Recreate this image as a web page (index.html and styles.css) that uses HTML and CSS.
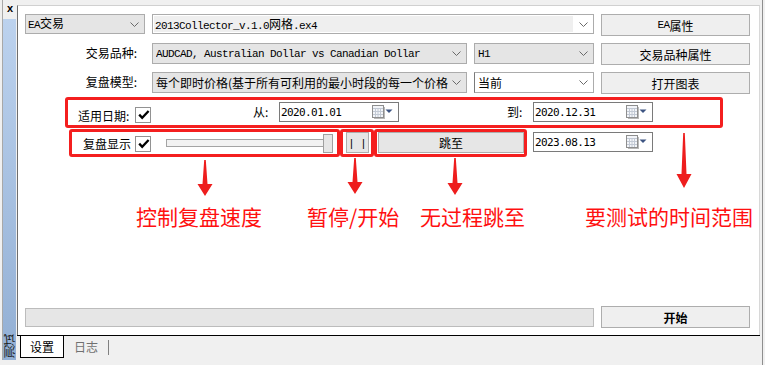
FILE: index.html
```html
<!DOCTYPE html>
<html lang="zh-CN">
<head>
    <meta charset="UTF-8">
    <title>测试</title>
    <link rel="stylesheet" href="styles.css">
</head>
<body>

<div class="side">
    <div class="close">x</div>
    <div class="side-bar"><span class="side-title">测试</span></div>
</div>

<div class="main">
    <div class="panel">
        <div class="row">
            <div class="combo combo-ea">
                <span class="val"><span class="mono">EA</span>交易</span>
                <svg class="chev" width="9" height="5" viewBox="0 0 9 5"><path d="M0.5 0.5 4.5 4.5 8.5 0.5" fill="none" stroke="#6a6a6a"/></svg>
            </div>
            <div class="combo combo-file">
                <span class="edit"><span class="mono">2013Collector_v.1.0</span>网格<span class="mono">.ex4</span></span>
                <svg class="chev" width="9" height="5" viewBox="0 0 9 5"><path d="M0.5 0.5 4.5 4.5 8.5 0.5" fill="none" stroke="#6a6a6a"/></svg>
            </div>
            <button class="btn"><span class="mono">EA</span>属性</button>
        </div>

        <div class="row">
            <div class="label">交易品种:</div>
            <div class="combo combo-wide">
                <span class="val mono">AUDCAD, Australian Dollar vs Canadian Dollar</span>
                <svg class="chev" width="9" height="5" viewBox="0 0 9 5"><path d="M0.5 0.5 4.5 4.5 8.5 0.5" fill="none" stroke="#6a6a6a"/></svg>
            </div>
            <div class="combo combo-small">
                <span class="val mono">H1</span>
                <svg class="chev" width="9" height="5" viewBox="0 0 9 5"><path d="M0.5 0.5 4.5 4.5 8.5 0.5" fill="none" stroke="#6a6a6a"/></svg>
            </div>
            <button class="btn">交易品种属性</button>
        </div>

        <div class="row">
            <div class="label">复盘模型:</div>
            <div class="combo combo-wide">
                <span class="val">每个即时价格(基于所有可利用的最小时段的每一个价格)</span>
                <svg class="chev" width="9" height="5" viewBox="0 0 9 5"><path d="M0.5 0.5 4.5 4.5 8.5 0.5" fill="none" stroke="#6a6a6a"/></svg>
            </div>
            <div class="combo combo-small combo-white">
                <span class="val">当前</span>
                <svg class="chev" width="9" height="5" viewBox="0 0 9 5"><path d="M0.5 0.5 4.5 4.5 8.5 0.5" fill="none" stroke="#6a6a6a"/></svg>
            </div>
            <button class="btn">打开图表</button>
        </div>

        <div class="range">
            <span class="date-label">适用日期:</span>
            <span class="check"><svg width="12" height="10" viewBox="0 0 12 10"><path d="M1.2 4.6 4.2 7.8 10.6 1" fill="none" stroke="#000" stroke-width="2.3"/></svg></span>
            <span class="from">从:</span>
            <div class="picker">
                <span class="date">2020.01.01</span>
                <svg width="21" height="14" viewBox="0 0 21 14"><rect x="2" y="2" width="11" height="12" fill="#b9b9b9"/><rect x="0.5" y="0.5" width="11" height="12" fill="#f3f5f9" stroke="#8e8e8e"/><path d="M1 3.5h10M1 6.5h10M1 9.5h10M3.5 3v9M6 3v9M8.5 3v9" stroke="#c2c9d4"/><path d="M13.5 4.5h7l-3.5 3.5z" fill="#3d5482"/></svg>
            </div>
            <span class="to">到:</span>
            <div class="picker">
                <span class="date">2020.12.31</span>
                <svg width="21" height="14" viewBox="0 0 21 14"><rect x="2" y="2" width="11" height="12" fill="#b9b9b9"/><rect x="0.5" y="0.5" width="11" height="12" fill="#f3f5f9" stroke="#8e8e8e"/><path d="M1 3.5h10M1 6.5h10M1 9.5h10M3.5 3v9M6 3v9M8.5 3v9" stroke="#c2c9d4"/><path d="M13.5 4.5h7l-3.5 3.5z" fill="#3d5482"/></svg>
            </div>
        </div>

        <div class="replay">
            <div class="mark mark-a">
                <span class="replay-label">复盘显示</span>
                <span class="check"><svg width="12" height="10" viewBox="0 0 12 10"><path d="M1.2 4.6 4.2 7.8 10.6 1" fill="none" stroke="#000" stroke-width="2.3"/></svg></span>
                <div class="slider">
                    <div class="track"></div>
                    <div class="thumb"></div>
                </div>
            </div>
            <div class="mark mark-b">
                <button class="pause">| |</button>
            </div>
            <div class="mark mark-c">
                <button class="jump">跳至</button>
            </div>
            <div class="picker picker-low">
                <span class="date">2023.08.13</span>
                <svg width="21" height="14" viewBox="0 0 21 14"><rect x="2" y="2" width="11" height="12" fill="#b9b9b9"/><rect x="0.5" y="0.5" width="11" height="12" fill="#f3f5f9" stroke="#8e8e8e"/><path d="M1 3.5h10M1 6.5h10M1 9.5h10M3.5 3v9M6 3v9M8.5 3v9" stroke="#c2c9d4"/><path d="M13.5 4.5h7l-3.5 3.5z" fill="#3d5482"/></svg>
            </div>
        </div>

        <!-- annotations drawn over the form -->
        <svg class="arrow arrow-1" width="16" height="36" viewBox="0 0 16 36"><polygon points="7.2,0 8.8,0 10.5,24 15.5,24 8,36 0.5,24 5.5,24" fill="#ee1d1d"/></svg>
        <svg class="arrow arrow-2" width="16" height="36" viewBox="0 0 16 36"><polygon points="7.2,0 8.8,0 10.5,24 15.5,24 8,36 0.5,24 5.5,24" fill="#ee1d1d"/></svg>
        <svg class="arrow arrow-3" width="16" height="37" viewBox="0 0 16 37"><polygon points="7.2,0 8.8,0 10.5,25 15.5,25 8,37 0.5,25 5.5,25" fill="#ee1d1d"/></svg>
        <svg class="arrow arrow-4" width="16" height="55" viewBox="0 0 16 55"><polygon points="7.2,0 8.8,0 10.5,41 15.5,41 8,55 0.5,41 5.5,41" fill="#ee1d1d"/></svg>

        <span class="note note-1">控制复盘速度</span>
        <span class="note note-2">暂停/开始</span>
        <span class="note note-3">无过程跳至</span>
        <span class="note note-4">要测试的时间范围</span>

        <div class="bottom">
            <div class="progress"></div>
            <button class="btn btn-start">开始</button>
        </div>
    </div>

    <div class="tabs">
        <span class="tab-on">设置</span>
        <span class="tab">日志</span>
        <span class="tab-sep"></span>
    </div>
</div>

</body>
</html>
```

FILE: styles.css
```css
* {
    box-sizing: border-box;
}

body {
    margin: 0;
    width: 765px;
    height: 365px;
    overflow: hidden;
    display: flex;
    background: #f0f0f0;
    font-family: "Noto Sans CJK SC", sans-serif;
    font-size: 12px;
    color: #000;
}

.mono {
    font-family: "Liberation Mono", monospace;
    font-size: 11px;
    letter-spacing: -0.6px;
}

/* left dock strip */
.side {
    flex: none;
    width: 17px;
    height: 365px;
    padding-left: 2px;
    display: flex;
    flex-direction: column;
}

.close {
    flex: none;
    height: 19px;
    padding-left: 4px;
    border-left: 1px solid #a8a8a8;
    font-family: "Liberation Sans", sans-serif;
    font-size: 11px;
    font-weight: bold;
    line-height: 17px;
}

.side-bar {
    flex: none;
    height: 341px;
    width: 14px;
    border-left: 1px solid #a8a8a8;
    background: linear-gradient(to bottom, #bcd2ee, #92afd4);
    display: flex;
    align-items: flex-end;
    justify-content: center;
}

.side-title {
    writing-mode: vertical-rl;
    transform: rotate(180deg);
    font-size: 12px;
    line-height: 13px;
    margin-bottom: 2px;
    color: #1a1a1a;
}

/* main area */
.main {
    flex: 1;
    min-width: 0;
    margin-right: 2px;
    border-right: 1px solid #8e8e8e;
    display: flex;
    flex-direction: column;
}

.panel {
    position: relative;
    height: 330px;
    margin: 5px 2px 0 0;
    padding: 8px 0 7px 7px;
    background: #fff;
    border-left: 1px solid #6e6e6e;
    border-top: 1px solid #d0d0d0;
    border-right: 1px solid #d8d8d8;
    display: flex;
    flex-direction: column;
}

.row {
    display: flex;
    align-items: flex-start;
    height: 22px;
}

.row + .row {
    margin-top: 7px;
}

.label {
    flex: none;
    width: 120px;
    height: 22px;
    padding-right: 8px;
    text-align: right;
    line-height: 20px;
}

.combo {
    flex: none;
    display: flex;
    align-items: center;
    height: 20px;
    padding: 0 5px 0 2px;
    border: 1px solid #acacac;
    background: #e5e5e5;
    white-space: nowrap;
}

.combo .val {
    flex: 1;
    overflow: hidden;
    line-height: 18px;
}

.chev {
    flex: none;
    margin-left: 4px;
}

.combo-ea {
    width: 120px;
}

.combo-file {
    width: 442px;
    margin-left: 7px;
    padding: 1px 5px 1px 1px;
    background: #fff;
}

.combo-file .edit {
    flex: 1;
    height: 16px;
    margin-right: 2px;
    padding-left: 1px;
    background: #efefef;
    line-height: 16px;
}

.combo-wide {
    width: 315px;
    height: 21px;
    margin-left: 7px;
    padding-left: 3px;
}

.combo-small {
    width: 120px;
    height: 21px;
    margin-left: 7px;
    padding-left: 3px;
}

.combo-white {
    background: #fff;
    border-left-color: #7a7a7a;
}

.btn {
    flex: none;
    width: 149px;
    height: 22px;
    margin-left: 7px;
    padding: 0;
    border: 1px solid #adadad;
    background: #efefef;
    font-family: inherit;
    font-size: 12px;
    color: #000;
    display: flex;
    align-items: center;
    justify-content: center;
}

/* date range block */
.range {
    display: flex;
    align-items: flex-start;
    width: 658px;
    height: 31px;
    margin: 3px 0 0 40px;
    padding-left: 10px;
    border: 3px solid #f41f1f;
    border-radius: 3px;
}

.date-label {
    width: 57px;
    margin-top: 6px;
    line-height: 20px;
}

.check {
    flex: none;
    width: 16px;
    height: 16px;
    margin-top: 7px;
    padding: 2px 0 0 2px;
    border: 1px solid #929292;
    background: #fff;
    display: flex;
    align-items: flex-start;
}

.from,
.to {
    width: 26px;
    margin-top: 2px;
    line-height: 20px;
}

.from {
    margin-left: 102px;
}

.to {
    margin-left: 108px;
}

.picker {
    flex: none;
    width: 120px;
    height: 20px;
    margin-top: 2px;
    padding: 0 5px 0 1px;
    border: 1px solid #7a7a7a;
    background: #fff;
    display: flex;
    align-items: center;
    justify-content: space-between;
}

.date {
    font-family: "DejaVu Sans Mono", monospace;
    font-size: 11px;
    letter-spacing: -0.6px;
}

/* replay controls */
.replay {
    display: flex;
    align-items: flex-start;
    margin: 1px 0 0 44px;
}

.mark {
    flex: none;
    height: 28px;
    border: 3px solid #f41f1f;
    border-radius: 3px;
    display: flex;
    align-items: flex-start;
}

.mark-a {
    width: 271px;
    padding-left: 11px;
}

.replay-label {
    width: 48px;
    margin-top: 2px;
    line-height: 20px;
}

.mark-a .check {
    margin: 4px 0 0 4px;
}

.slider {
    position: relative;
    width: 167px;
    height: 19px;
    margin: 2px 0 0 15px;
}

.track {
    margin-top: 5px;
    height: 8px;
    border: 1px solid #a4a4a4;
    background: #f2f2f2;
}

.thumb {
    position: absolute;
    right: 0;
    top: 0;
    width: 10px;
    height: 19px;
    border: 1px solid #a0a0a0;
    background: #e6e6e6;
}

.mark-b {
    width: 34px;
    padding-left: 3px;
}

.mark-c {
    width: 153px;
    padding-left: 1px;
}

.pause,
.jump {
    height: 21px;
    padding: 0;
    border: 1px solid #adadad;
    background: #e6e6e6;
    font-family: inherit;
    font-size: 12px;
    color: #000;
}

.pause {
    width: 23px;
    font-family: "Liberation Sans", sans-serif;
    font-size: 11px;
    word-spacing: 6px;
}

.jump {
    width: 146px;
}

.picker-low {
    margin: 3px 0 0 6px;
}

/* annotations */
.arrow {
    position: absolute;
}

.arrow-1 { left: 179px; top: 154px; }
.arrow-2 { left: 329px; top: 152px; }
.arrow-3 { left: 429px; top: 152px; }
.arrow-4 { left: 658px; top: 127px; }

.note {
    position: absolute;
    top: 200px;
    color: #ff1010;
    font-size: 21px;
    line-height: 21px;
    white-space: nowrap;
}

.note-1 { left: 118px; }
.note-2 { left: 289px; }
.note-3 { left: 402px; }
.note-4 { left: 567px; }

/* bottom bar */
.bottom {
    margin-top: auto;
    display: flex;
    align-items: center;
    height: 22px;
}

.progress {
    flex: none;
    width: 569px;
    height: 19px;
    border: 1px solid #bcbcbc;
    background: #e6e6e6;
}

.btn-start {
    font-weight: bold;
}

/* tabs */
.tabs {
    height: 25px;
    margin-right: 2px;
    padding-left: 3px;
    border-top: 1px solid #000;
    display: flex;
    align-items: flex-start;
}

.tab-on {
    width: 44px;
    height: 22px;
    border: 1px solid #000;
    border-top: none;
    background: #fff;
    text-align: center;
    line-height: 21px;
}

.tab {
    margin-left: 10px;
    color: #707070;
    line-height: 21px;
}

.tab-sep {
    width: 1px;
    height: 15px;
    margin: 4px 0 0 10px;
    background: #808080;
}
```
